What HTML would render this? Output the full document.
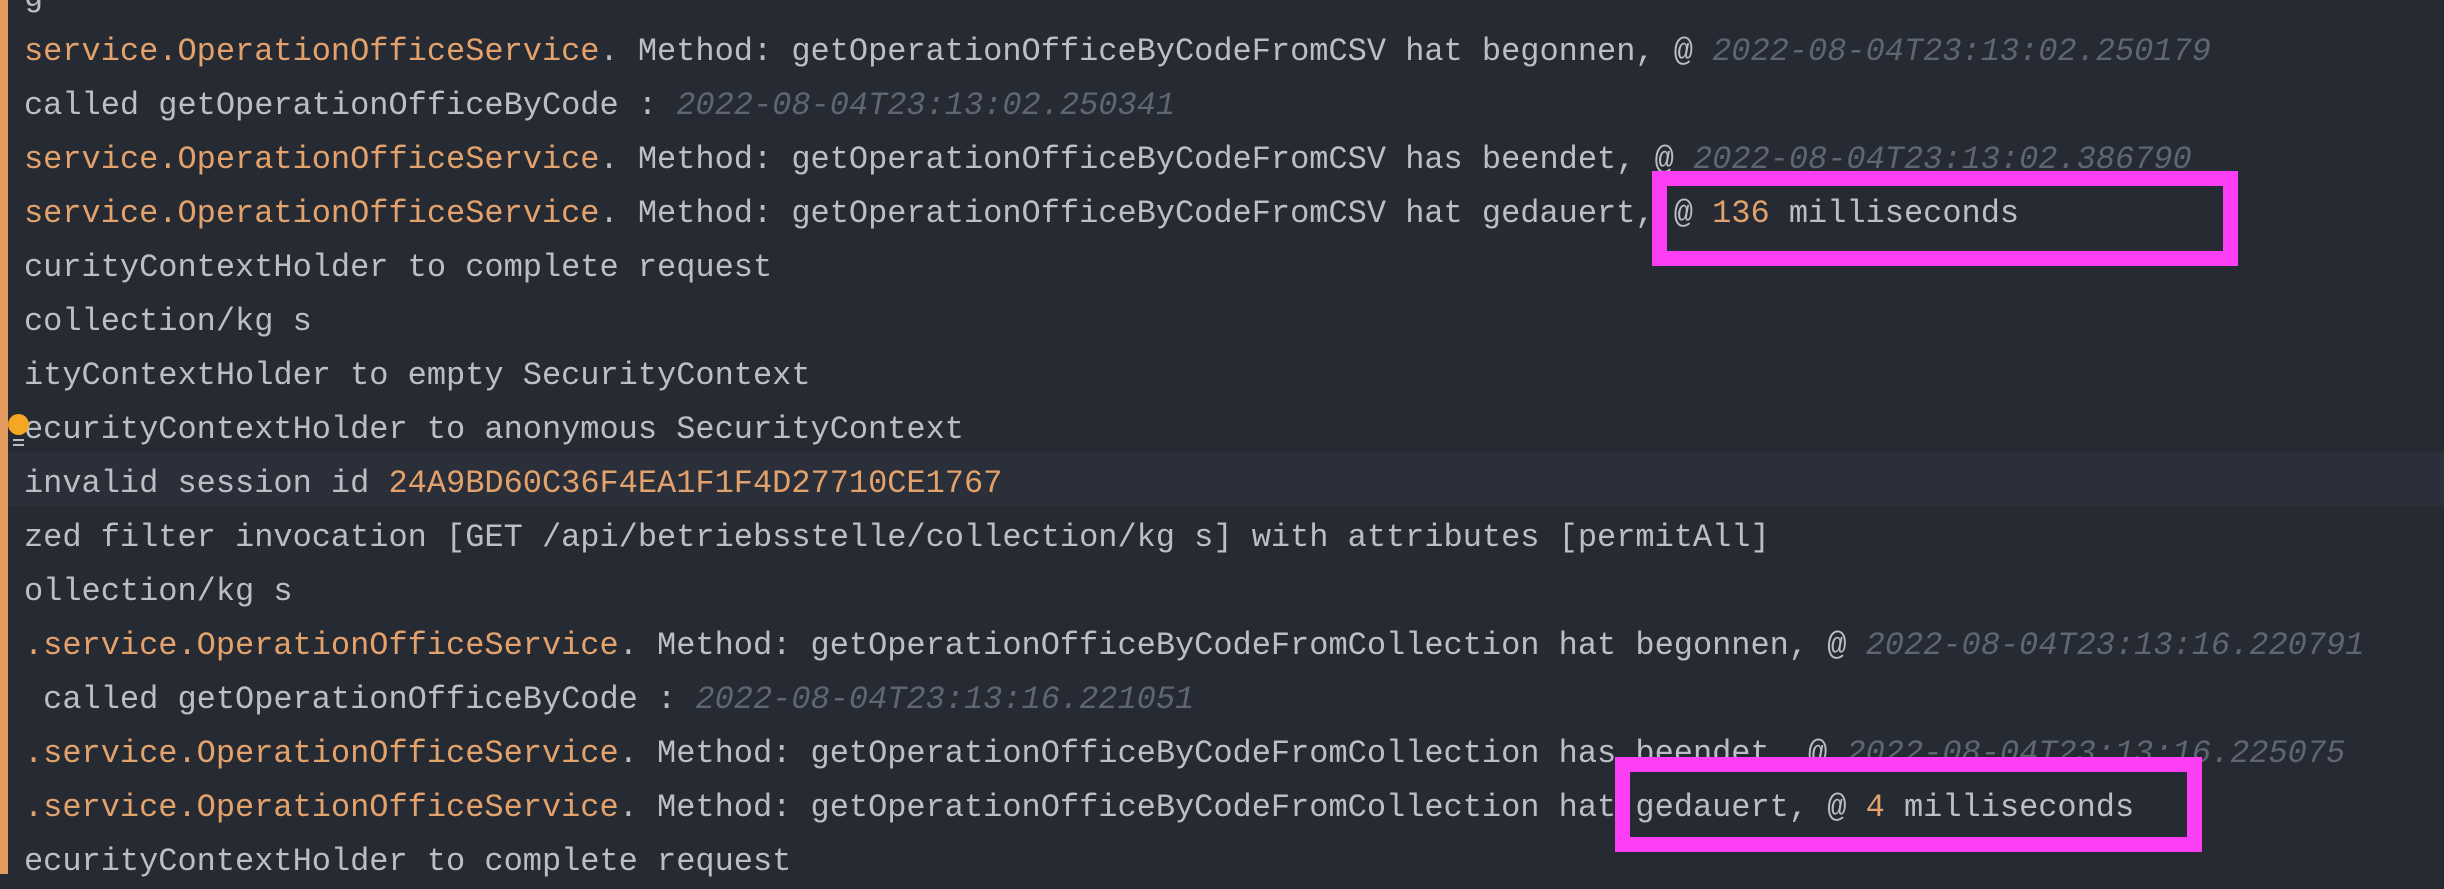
<!DOCTYPE html>
<html><head><style>
body{margin:0;width:2444px;height:874px;background:#262a33;overflow:hidden;position:relative;font-family:"Liberation Mono",monospace;font-size:32px;letter-spacing:-0.02px;color:#bcbec4}
.bar{position:absolute;left:0;top:0;width:8px;height:874px;background:#e39b5d}
.l{position:absolute;left:24px;height:54px;line-height:54px;white-space:pre}
.o{color:#e3a16b}.g{color:#5f6573;font-style:italic}
.hl{position:absolute;left:8px;top:452px;width:2436px;height:54px;background:#2b2f39}
.box{position:absolute;border:15px solid #fc3ef5;box-sizing:border-box}
</style></head><body>
<div class="hl"></div>
<div class="bar"></div>
<div class="l" style="top:-29px">g</div>
<div class="l" style="top:25px"><span class="o">service.OperationOfficeService</span>. Method: getOperationOfficeByCodeFromCSV hat begonnen, @ <span class="g">2022-08-04T23:13:02.250179</span></div>
<div class="l" style="top:79px">called getOperationOfficeByCode : <span class="g">2022-08-04T23:13:02.250341</span></div>
<div class="l" style="top:133px"><span class="o">service.OperationOfficeService</span>. Method: getOperationOfficeByCodeFromCSV has beendet, @ <span class="g">2022-08-04T23:13:02.386790</span></div>
<div class="l" style="top:187px"><span class="o">service.OperationOfficeService</span>. Method: getOperationOfficeByCodeFromCSV hat gedauert, @ <span class="o">136</span> milliseconds</div>
<div class="l" style="top:241px">curityContextHolder to complete request</div>
<div class="l" style="top:295px">collection/kg s</div>
<div class="l" style="top:349px">ityContextHolder to empty SecurityContext</div>
<div class="l" style="top:403px">ecurityContextHolder to anonymous SecurityContext</div>
<div class="l" style="top:457px">invalid session id <span class="o">24A9BD60C36F4EA1F1F4D27710CE1767</span></div>
<div class="l" style="top:511px">zed filter invocation [GET /api/betriebsstelle/collection/kg s] with attributes [permitAll]</div>
<div class="l" style="top:565px">ollection/kg s</div>
<div class="l" style="top:619px"><span class="o">.service.OperationOfficeService</span>. Method: getOperationOfficeByCodeFromCollection hat begonnen, @ <span class="g">2022-08-04T23:13:16.220791</span></div>
<div class="l" style="top:673px"> called getOperationOfficeByCode : <span class="g">2022-08-04T23:13:16.221051</span></div>
<div class="l" style="top:727px"><span class="o">.service.OperationOfficeService</span>. Method: getOperationOfficeByCodeFromCollection has beendet, @ <span class="g">2022-08-04T23:13:16.225075</span></div>
<div class="l" style="top:781px"><span class="o">.service.OperationOfficeService</span>. Method: getOperationOfficeByCodeFromCollection hat gedauert, @ <span class="o">4</span> milliseconds</div>
<div class="l" style="top:835px">ecurityContextHolder to complete request</div>
<div style="position:absolute;left:8px;top:414px;width:21px;height:21px;border-radius:50%;background:#f5a623"></div>
<div style="position:absolute;left:13px;top:439px;width:11px;height:2px;background:#bcbec4;box-shadow:0 5px 0 #bcbec4"></div>
<div class="box" style="left:1652px;top:171px;width:586px;height:95px"></div>
<div class="box" style="left:1615px;top:757px;width:587px;height:95px"></div>
</body></html>
